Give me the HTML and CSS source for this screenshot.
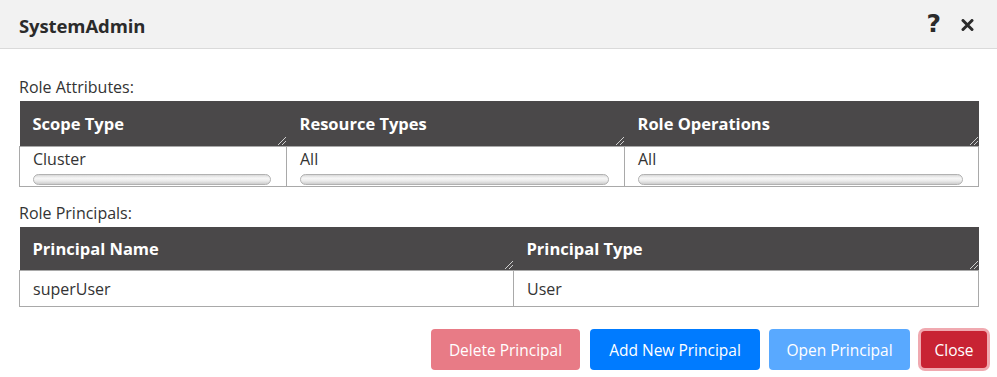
FILE: index.html
```html
<!DOCTYPE html>
<html>
<head>
<meta charset="utf-8">
<link rel="stylesheet" href="styles.css">
</head>
<body>
<div class="dialog">
  <div class="header">
    <div class="title">SystemAdmin</div>
    <div class="tools">
      <span class="help">?</span>
      <svg class="close-x" width="13" height="12" viewBox="0 0 13 12"><path d="M2 1.5 L11 10.5 M11 1.5 L2 10.5" stroke="#2b2b2b" stroke-width="3" stroke-linecap="round"/></svg>
    </div>
  </div>
  <div class="content">
    <div class="label">Role Attributes:</div>
    <table class="grid attrs">
      <thead>
        <tr><th class="c1">Scope Type</th><th class="c2">Resource Types</th><th class="c3">Role Operations</th></tr>
      </thead>
      <tbody>
        <tr>
          <td><div class="val">Cluster</div><div class="pill"></div></td>
          <td><div class="val">All</div><div class="pill"></div></td>
          <td><div class="val">All</div><div class="pill"></div></td>
        </tr>
      </tbody>
    </table>
    <div class="label second">Role Principals:</div>
    <table class="grid principals">
      <thead>
        <tr><th class="p1">Principal Name</th><th class="p2">Principal Type</th></tr>
      </thead>
      <tbody>
        <tr><td>superUser</td><td>User</td></tr>
      </tbody>
    </table>
    <div class="buttons">
      <button class="btn btn-delete">Delete Principal</button>
      <button class="btn btn-add">Add New Principal</button>
      <button class="btn btn-open">Open Principal</button>
      <button class="btn btn-close">Close</button>
    </div>
  </div>
</div>
</body>
</html>
```

FILE: styles.css
```css
html, body {
  margin: 0;
  padding: 0;
  background: #fff;
}
body {
  font-family: "Open Sans", "Noto Sans", sans-serif;
  color: #222;
  width: 997px;
  height: 377px;
  overflow: hidden;
}
.header {
  height: 48px;
  background: #f2f2f2;
  border-bottom: 1px solid #dadada;
  display: flex;
  align-items: center;
  justify-content: space-between;
  padding: 0 23px 0 19px;
}
.title {
  font-size: 18.5px;
  font-weight: 700;
  color: #2b2b2b;
  letter-spacing: -0.1px;
  padding-top: 2px;
}
.tools {
  display: flex;
  align-items: center;
  gap: 20px;
}
.help {
  font-size: 25px;
  font-weight: 900;
  color: #2b2b2b;
  line-height: 1;
  font-family: "DejaVu Sans", sans-serif;
  margin-top: -1px;
}
.close-x {
  display: block;
  margin-top: 2px;
}
.content {
  padding: 28px 19px 0 19px;
}
.label {
  font-size: 16px;
  line-height: 20px;
  color: #333;
  margin-bottom: 4px;
}
.label.second {
  margin-top: 16px;
  margin-bottom: 4px;
}
.grid {
  width: 960px;
  border-collapse: collapse;
  table-layout: fixed;
}
.grid th {
  background: #4a4849;
  color: #fff;
  font-weight: 700;
  font-size: 16.5px;
  text-align: left;
  padding: 0 13px;
  height: 45px;
  position: relative;
}
.grid th::after {
  content: "";
  position: absolute;
  right: 1px;
  bottom: 1px;
  width: 8px;
  height: 8px;
  background: linear-gradient(135deg, transparent 0 45%, #cfcfcf 45% 55%, transparent 55% 70%, #cfcfcf 70% 80%, transparent 80%);
}
.grid td {
  border: 1px solid #a9a9a9;
  font-size: 16px;
  color: #333;
  padding: 0 13px;
  vertical-align: top;
}
.attrs .c1 { width: 241px; }
.attrs .c2 { width: 312px; }
.attrs td {
  height: 37px;
  padding-top: 2px;
}
.val {
  line-height: 20px;
}
.pill {
  margin-top: 5px;
  margin-right: 2px;
  height: 9px;
  border: 1px solid #b2b2b2;
  border-radius: 6px;
  background: linear-gradient(to bottom, #d9d9d9, #f7f7f7 35%, #ececec 65%, #cdcdcd);
}
.principals th { height: 43px; }
.principals .p1 { width: 468px; }
.principals td {
  height: 35px;
  vertical-align: middle;
}
.buttons {
  display: flex;
  justify-content: flex-end;
  gap: 10px;
  margin-top: 22px;
  margin-right: -9px;
}
.btn {
  font-family: "Open Sans", "Noto Sans", sans-serif;
  font-size: 15.5px;
  height: 41px;
  border: none;
  border-radius: 4px;
  color: #fff;
  padding: 0 10px;
}
.btn-delete { background: #e87b86; width: 149px; }
.btn-add { background: #007bff; width: 170px; margin-right: -1px; }
.btn-open { background: #59a9ff; width: 141px; margin-right: 1px; }
.btn-close {
  background: #c82333;
  width: 66px;
  height: 37px;
  margin-top: 2px;
  box-shadow: 0 0 0 3px #f0a9b0;
  padding: 0;
}
```
